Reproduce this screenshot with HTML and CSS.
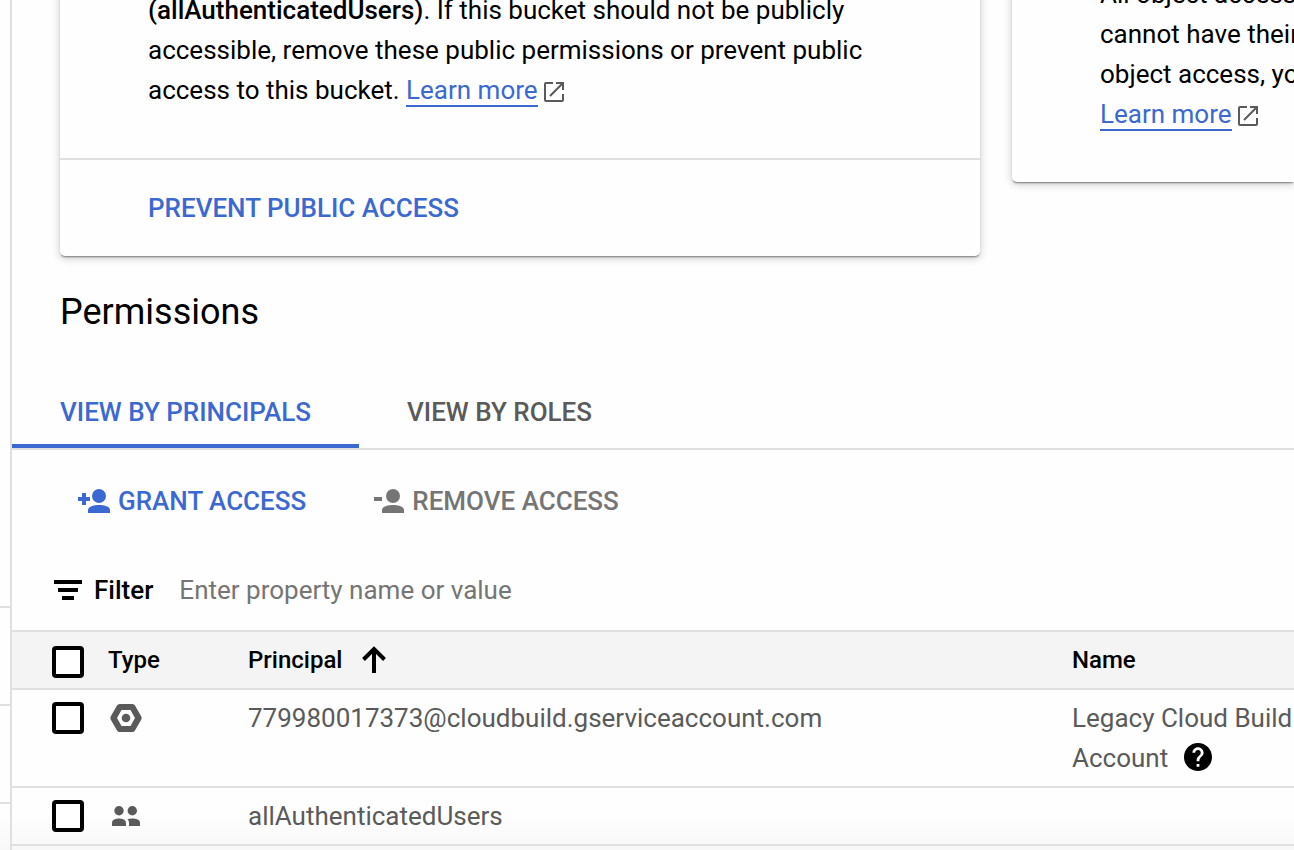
FILE: index.html
```html
<!DOCTYPE html>
<html lang="en">
<head>
<meta charset="utf-8">
<title>Bucket permissions</title>
<link rel="stylesheet" href="styles.css">
</head>
<body>
<svg class="defs" aria-hidden="true">
  <symbol id="open" viewBox="0 0 20 20"><path d="M9 1H2Q1 1 1 2V18Q1 19 2 19H18Q19 19 19 18V12M12 1H19V8M19 1L6 14" fill="none" stroke="currentColor" stroke-width="2"/></symbol>
</svg>
<div class="app">
  <div class="rail"><span class="rail-row rail-first"></span><span class="rail-row"></span><span class="rail-row"></span></div>
  <main class="panel">
    <div class="cards">
      <section class="card">
        <p class="card-text"><strong>(allAuthenticatedUsers)</strong>. If this bucket should not be publicly accessible, remove these public permissions or prevent public access to this bucket. <a class="link" href="#">Learn more</a><svg class="open-icon" aria-hidden="true"><use href="#open"/></svg></p>
        <div class="card-actions"><button class="text-button" type="button">PREVENT PUBLIC ACCESS</button></div>
      </section>
      <section class="card card-next">
        <p class="card-text card-text-cut">All object access<br>cannot have their<br>object access, you<br><a class="link" href="#">Learn more</a><svg class="open-icon" aria-hidden="true"><use href="#open"/></svg></p>
      </section>
    </div>
    <h2 class="heading">Permissions</h2>
    <div class="tabs" role="tablist">
      <button class="tab tab-active" type="button" role="tab" aria-selected="true">VIEW BY PRINCIPALS</button>
      <button class="tab" type="button" role="tab" aria-selected="false">VIEW BY ROLES</button>
    </div>
    <div class="toolbar">
      <button class="tool" type="button"><svg class="tool-icon" width="32" height="24" viewBox="0 0 32 24" aria-hidden="true"><path d="M0 8h4V4h4v4h4v4H8v4H4v-4H0z"/><circle cx="21" cy="7" r="7"/><path d="M10 24v-3c0-4 7-5 11-5s11 1 11 5v3z"/></svg>GRANT ACCESS</button>
      <button class="tool tool-muted" type="button"><svg class="tool-icon" width="30" height="24" viewBox="0 0 30 24" aria-hidden="true"><path d="M0 8h8v4H0z"/><circle cx="19" cy="7" r="7"/><path d="M8 24v-3c0-4 7-5 11-5s11 1 11 5v3z"/></svg>REMOVE ACCESS</button>
    </div>
    <div class="filter">
      <svg width="28" height="20" viewBox="0 0 28 20" aria-hidden="true"><path d="M0 0h28v4H0zM4 8h20v4H4zM8 16h12v4H8z"/></svg>
      <label class="filter-label" for="filter">Filter</label>
      <input class="filter-input" id="filter" type="text" placeholder="Enter property name or value">
    </div>
    <table class="grid">
      <colgroup><col class="col-check"><col class="col-type"><col class="col-principal"><col></colgroup>
      <thead>
        <tr>
          <th class="check-cell"><input class="check" type="checkbox" aria-label="Select all"></th>
          <th>Type</th>
          <th><span class="sort">Principal<svg width="24" height="28" viewBox="0 0 24 28" aria-hidden="true"><path d="M12 27V3M1.500 13.500L12 3L22.500 13.500" fill="none" stroke="#000" stroke-width="4"/></svg></span></th>
          <th>Name</th>
        </tr>
      </thead>
      <tbody>
        <tr>
          <td class="check-cell"><input class="check" type="checkbox" aria-label="Select cloudbuild service account"></td>
          <td><span class="type"><svg width="32" height="28" viewBox="0 0 32 28" aria-hidden="true"><path fill-rule="evenodd" d="M9.500 0H22.500Q24 0 25 1.500L31.300 12.500Q32 14 31.300 15.500L25 26.500Q24 28 22.500 28H9.500Q8 28 7 26.500L.7 15.500Q0 14 .7 12.500L7 1.500Q8 0 9.500 0ZM11.500 6L7 14L11.500 22H20.500L25 14L20.500 6Z"/><circle cx="16" cy="14" r="4.300"/></svg></span></td>
          <td>779980017373@cloudbuild.gserviceaccount.com</td>
          <td class="name">Legacy Cloud Build<br>Account<svg class="help" viewBox="2 2 20 20" aria-label="Help" role="img"><path fill="#000" d="M12 2C6.480 2 2 6.480 2 12s4.480 10 10 10 10-4.480 10-10S17.520 2 12 2zm1 17h-2v-2h2v2zm2.070-7.750l-.9.920C13.450 12.900 13 13.500 13 15h-2v-.5c0-1.100.45-2.100 1.170-2.830l1.240-1.260c.37-.36.590-.86.590-1.410 0-1.100-.9-2-2-2s-2 .9-2 2H8c0-2.210 1.790-4 4-4s4 1.790 4 4c0 .88-.36 1.680-.93 2.250z"/></svg></td>
        </tr>
        <tr>
          <td class="check-cell"><input class="check" type="checkbox" aria-label="Select allAuthenticatedUsers"></td>
          <td><span class="type"><svg width="32" height="20" viewBox="0 0 32 20" aria-hidden="true"><circle cx="9" cy="4.700" r="4.700"/><circle cx="22.300" cy="4.700" r="4.700"/><path d="M2 20V17C2 13.500 6 12.500 9 12.500S16 13.500 16 17V20ZM19 20V17Q19 14.500 17.500 13Q20 12.500 22.300 12.500C26 12.500 30 13.500 30 17V20Z"/></svg></span></td>
          <td>allAuthenticatedUsers</td>
          <td></td>
        </tr>
      </tbody>
    </table>
  </main>
</div>
</body>
</html>
```
FILE: styles.css
```css
* { box-sizing: border-box; }
body {
  margin: 0;
  height: 100vh;
  overflow: hidden;
  font: 400 26px/40px Roboto, sans-serif;
  color: #000;
  background: linear-gradient(to bottom, #fefefe calc(100% - 36px), #f8f8f8);
}
button { font: inherit; font-weight: 500; border: 0; background: none; padding: 0; cursor: pointer; white-space: nowrap; }
.defs { display: none; }
.app { display: flex; height: 100%; }
.rail { flex: none; width: 12px; border-right: 2px solid #e0e0e0; }
.rail-row { display: block; height: 98px; border-bottom: 2px solid #e0e0e0; }
.rail-first { height: 608px; }
.panel { flex: 1; min-width: 0; overflow: hidden; }
.cards {
  display: grid;
  grid-template-columns: minmax(0, 920px) minmax(282px, 1fr);
  gap: 32px;
  align-items: start;
  margin-top: -10px;
  padding-left: 48px;
}
.card {
  background: #fefefe;
  border-radius: 0 0 5px 5px;
  box-shadow: 0 2px 2px -1px rgba(0, 0, 0, .45), 0 2px 8px rgba(0, 0, 0, .22);
}
.card-next { margin-top: -16px; border-radius: 0 0 0 5px; }
.card-text { margin: 0; padding: 0 88px 48px; }
.card-text strong { font-weight: 500; }
.card-text-cut { padding-right: 0; white-space: nowrap; }
.link { color: #3c69d1; text-decoration: none; border-bottom: 2px solid; }
.open-icon { width: 20px; height: 20px; margin-left: 6px; vertical-align: -3px; color: #5a5a5a; }
.card-actions { border-top: 2px solid #e0e0e0; padding: 28px 88px; }
.text-button { color: #3c69d1; display: block; }
.heading { margin: 32px 0 40px 48px; font-size: 36px; line-height: 48px; font-weight: 400; }
.tabs { display: flex; border-bottom: 2px solid #e0e0e0; }
.tab { height: 72px; padding: 0 48px; color: #5a5a5a; border: solid transparent; border-width: 4px 0; }
.tab-active { color: #3c69d1; border-bottom-color: #3c69d1; }
.toolbar { display: flex; gap: 68px; padding: 31px 66px 29px; }
.tool { display: flex; align-items: center; gap: 8px; color: #3c69d1; }
.tool-icon { fill: currentColor; }
.tool-muted { color: #757575; }
.filter { display: flex; align-items: center; padding: 20px 42px; }
.filter-label { margin: 0 26px 0 12px; font-weight: 500; }
.filter-input { flex: 1; min-width: 0; height: 40px; padding: 0; border: 0; outline: 0; background: none; font: inherit; }
.filter-input::placeholder { color: #757575; opacity: 1; }
.grid { width: 100%; table-layout: fixed; border-collapse: separate; border-spacing: 0; color: #5a5a5a; }
.col-check { width: 96px; }
.col-type { width: 140px; }
.col-principal { width: 824px; }
.grid th, .grid td { padding: 8px 0; border-bottom: 2px solid #e0e0e0; text-align: left; vertical-align: top; }
.grid th { background: #f4f4f4; border-top: 2px solid #e0e0e0; font-size: 24px; font-weight: 500; color: #000; }
.grid .check-cell { padding: 12px 0 12px 40px; }
.grid th.check-cell { padding: 14px 0 10px 40px; }
.check { appearance: none; display: block; width: 32px; height: 32px; margin: 0; border: 4px solid #000; border-radius: 4px; background: #fff; }
.sort { display: flex; align-items: center; gap: 20px; }
.type { display: flex; align-items: center; height: 40px; margin-left: 2px; }
.type svg { fill: #5a5a5a; }
.name { white-space: nowrap; }
.help { width: 28px; height: 28px; margin-left: 16px; vertical-align: -4px; }
```
